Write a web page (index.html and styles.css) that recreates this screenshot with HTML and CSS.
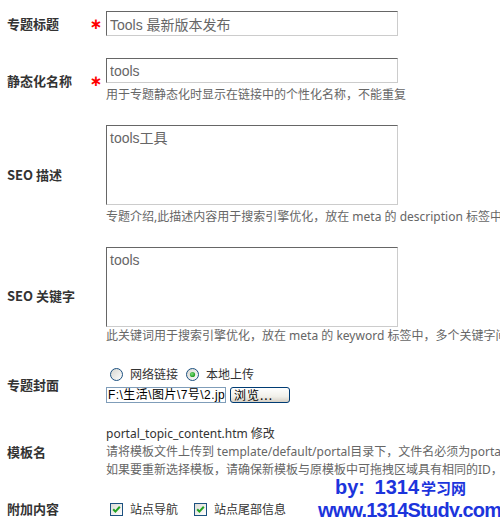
FILE: index.html
```html
<!DOCTYPE html>
<html lang="zh-CN">
<head>
<meta charset="utf-8">
<title>专题设置</title>
<link rel="stylesheet" href="styles.css">
</head>
<body>
<table class="form">
  <tr>
    <th class="label">专题标题</th>
    <td class="req">∗</td>
    <td class="field"><input class="txt" type="text" value="Tools 最新版本发布"></td>
  </tr>
  <tr>
    <th class="label">静态化名称</th>
    <td class="req">∗</td>
    <td class="field"><input class="txt" type="text" value="tools"><p class="hint">用于专题静态化时显示在链接中的个性化名称，不能重复</p></td>
  </tr>
  <tr>
    <th class="label">SEO 描述</th>
    <td class="req"></td>
    <td class="field"><textarea class="area">tools工具</textarea><p class="hint">专题介绍,此描述内容用于搜索引擎优化，放在 meta 的 description 标签中，多个关键字间请用半角逗号隔开</p></td>
  </tr>
  <tr>
    <th class="label">SEO 关键字</th>
    <td class="req"></td>
    <td class="field"><textarea class="area">tools</textarea><p class="hint tight">此关键词用于搜索引擎优化，放在 meta 的 keyword 标签中，多个关键字间请用半角逗号隔开</p></td>
  </tr>
  <tr>
    <th class="label">专题封面</th>
    <td class="req"></td>
    <td class="field">
      <div class="choices">
        <span class="choice">
          <svg class="mark" width="13" height="13" viewBox="0 0 13 13"><defs><linearGradient id="rg1" x1="0" y1="0" x2="1" y2="1"><stop offset="0" stop-color="#d6d5cf"/><stop offset="1" stop-color="#ffffff"/></linearGradient></defs><circle cx="6.5" cy="6.5" r="6" fill="url(#rg1)" stroke="#1c5180" stroke-width="1"/></svg>
          <span class="ctext">网络链接</span>
        </span>
        <span class="choice">
          <svg class="mark" width="13" height="13" viewBox="0 0 13 13"><defs><linearGradient id="rg2" x1="0" y1="0" x2="1" y2="1"><stop offset="0" stop-color="#d6d5cf"/><stop offset="1" stop-color="#ffffff"/></linearGradient><radialGradient id="dot" cx="0.4" cy="0.4" r="0.6"><stop offset="0" stop-color="#7fe07f"/><stop offset="1" stop-color="#1d9a1d"/></radialGradient></defs><circle cx="6.5" cy="6.5" r="6" fill="url(#rg2)" stroke="#1c5180" stroke-width="1"/><circle cx="6.5" cy="6.5" r="2.6" fill="url(#dot)"/></svg>
          <span class="ctext">本地上传</span>
        </span>
      </div>
      <div class="upload">
        <span class="filebox">F:\生活\图片\7号\2.jpg</span>
        <span class="browse">浏览...</span>
      </div>
    </td>
  </tr>
  <tr>
    <th class="label">模板名</th>
    <td class="req"></td>
    <td class="field tpl">
      <div class="tplname">portal_topic_content.htm 修改</div>
      <div class="tplhint">请将模板文件上传到 template/default/portal目录下，文件名必须为portal_topic_content_*.htm</div>
      <div class="tplhint">如果要重新选择模板，请确保新模板与原模板中可拖拽区域具有相同的ID，否则内容将会丢失</div>
    </td>
  </tr>
  <tr>
    <th class="label">附加内容</th>
    <td class="req"></td>
    <td class="field">
      <div class="choices checks">
        <span class="choice">
          <svg class="mark" width="13" height="13" viewBox="0 0 13 13"><defs><linearGradient id="cg1" x1="0" y1="0" x2="1" y2="1"><stop offset="0" stop-color="#dcdbd5"/><stop offset="1" stop-color="#ffffff"/></linearGradient></defs><rect x="0.5" y="0.5" width="12" height="12" fill="url(#cg1)" stroke="#1c5180"/><path d="M3.2 6.2 L5.4 8.6 L9.8 3.8" fill="none" stroke="#21a121" stroke-width="2"/></svg>
          <span class="ctext">站点导航</span>
        </span>
        <span class="choice">
          <svg class="mark" width="13" height="13" viewBox="0 0 13 13"><defs><linearGradient id="cg2" x1="0" y1="0" x2="1" y2="1"><stop offset="0" stop-color="#dcdbd5"/><stop offset="1" stop-color="#ffffff"/></linearGradient></defs><rect x="0.5" y="0.5" width="12" height="12" fill="url(#cg2)" stroke="#1c5180"/><path d="M3.2 6.2 L5.4 8.6 L9.8 3.8" fill="none" stroke="#21a121" stroke-width="2"/></svg>
          <span class="ctext">站点尾部信息</span>
        </span>
      </div>
    </td>
  </tr>
</table>
<div class="watermark">
  <div class="wm1">by: 1314<span class="wmcjk">学习网</span></div>
  <div class="wm2">www.1314Study.com</div>
</div>
</body>
</html>
```

FILE: styles.css
```css
html, body {
  margin: 0;
  padding: 0;
  background: #fff;
}
body {
  width: 500px;
  height: 517px;
  overflow: hidden;
  position: relative;
  font-family: "Noto Sans", "Noto Sans CJK SC", sans-serif;
  font-size: 12px;
  color: #333;
}
.form {
  border-collapse: collapse;
  border-spacing: 0;
  table-layout: fixed;
  width: 500px;
}
.form th, .form td {
  padding: 11px 0;
  vertical-align: middle;
}
.label {
  width: 79px;
  padding-left: 7px !important;
  text-align: left;
  font-family: "Noto Sans CJK SC", sans-serif;
  font-size: 13px;
  line-height: 16px;
  font-weight: bold;
  color: #333;
  white-space: nowrap;
}
.req {
  width: 20px;
  text-align: center;
  color: #f00;
  font-family: "DejaVu Sans", sans-serif;
  font-size: 15px;
  font-weight: bold;
  line-height: 16px;
}
.field {
  white-space: nowrap;
}
.txt {
  display: block;
  box-sizing: border-box;
  width: 292px;
  height: 25px;
  margin: 0;
  padding: 0 3px;
  border: 1px solid;
  border-color: #666 #ccc #ccc #666;
  font-family: "Liberation Sans", "Noto Sans CJK SC", sans-serif;
  font-size: 14px;
  color: #666;
  background: #fff;
  outline: none;
}
.area {
  display: block;
  box-sizing: border-box;
  width: 292px;
  height: 80px;
  margin: 0;
  padding: 3px 3px;
  border: 1px solid;
  border-color: #666 #ccc #ccc #666;
  font-family: "Liberation Sans", "Noto Sans CJK SC", sans-serif;
  font-size: 14px;
  line-height: 18px;
  color: #666;
  background: #fff;
  resize: none;
  overflow: hidden;
  outline: none;
}
.hint {
  margin: 4px 0 0;
  line-height: 16px;
  font-size: 12px;
  color: #666;
  white-space: nowrap;
}
.hint.tight {
  margin-top: 1px;
}
.choices {
  display: flex;
  align-items: center;
  height: 16px;
  padding-left: 4px;
  gap: 8px;
}
.checks {
  gap: 16px;
}
.choice {
  display: flex;
  align-items: center;
  gap: 7px;
}
.mark {
  display: block;
  flex: none;
}
.ctext {
  font-family: "Noto Sans CJK SC", sans-serif;
  font-size: 12px;
  line-height: 16px;
  color: #333;
}
.upload {
  display: flex;
  align-items: center;
  gap: 4px;
  margin-top: 5px;
  height: 16px;
}
.filebox {
  box-sizing: border-box;
  width: 120px;
  height: 16px;
  border: 1px solid #7f9db9;
  padding: 0 1px;
  font-family: "Liberation Sans", "Noto Sans CJK SC", sans-serif;
  font-size: 12px;
  line-height: 14px;
  letter-spacing: 0.45px;
  color: #000;
  overflow: hidden;
  white-space: nowrap;
}
.browse {
  box-sizing: border-box;
  width: 60px;
  height: 16px;
  border: 1px solid #003c74;
  border-radius: 3px;
  background: linear-gradient(#ffffff, #f1f0ea 60%, #d6d0c5);
  font-family: "Noto Sans CJK SC", sans-serif;
  font-size: 12px;
  line-height: 14px;
  color: #000;
  padding-left: 3px;
  letter-spacing: 1px;
}
.tpl {
  line-height: 18px;
}
.tplname {
  color: #333;
  font-size: 12px;
}
.tplhint {
  color: #666;
  font-size: 12px;
  white-space: nowrap;
}
.watermark {
  position: absolute;
  left: 318px;
  top: 476px;
  font-family: "Liberation Sans", "Noto Sans CJK SC", sans-serif;
  font-weight: bold;
  font-size: 20px;
  line-height: 22px;
  color: #1c34dc;
  white-space: nowrap;
}
.wm1 {
  padding-left: 17px;
  word-spacing: 4px;
}
.wmcjk {
  font-family: "Noto Sans CJK SC", sans-serif;
  font-size: 15px;
  margin-left: 2px;
}
.wm2 {
  letter-spacing: -0.8px;
}
```
